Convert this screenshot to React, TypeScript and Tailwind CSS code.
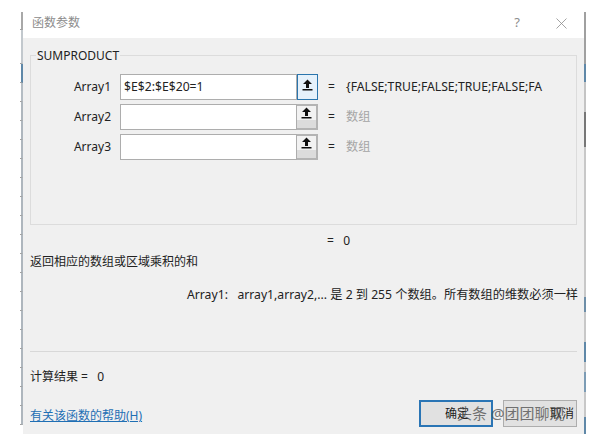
const font = { fontFamily: '"Noto Sans", "Noto Sans CJK SC", sans-serif' }

// bits of the worksheet that show behind the dialog, [height, colour]
const leftEdge: [number, string][] = [
    [18, '#a8a8a8'], [34, '#c2c8cd'], [19, '#5f88a8'], [19, '#b4bcc3'], [19, '#aeb6bd'], [19, '#aeb6bd'],
    [19, '#aeb6bd'], [19, '#aeb6bd'], [19, '#aeb6bd'], [19, '#aeb6bd'], [19, '#aeb6bd'], [19, '#aeb6bd'],
    [19, '#aeb6bd'], [19, '#aeb6bd'], [19, '#aeb6bd'], [19, '#aeb6bd'], [19, '#aeb6bd'], [19, '#aeb6bd'],
    [19, '#aeb6bd'], [19, '#aeb6bd'], [19, '#aeb6bd'],
]
const rightEdge: [number, string][] = [
    [52, '#a0a0a0'], [18, '#5f88a8'], [30, '#c4c4c4'], [35, '#777777'], [150, '#c8c8c8'], [15, '#6d8ea8'],
    [30, '#c8c8c8'], [20, '#5f88a8'], [10, '#c8c8c8'], [20, '#7c9cb5'], [25, '#c8c8c8'], [17, '#5f88a8'],
]

function UpIcon() {
    return (
        <svg width="11" height="12" viewBox="0 0 11 12" className="block">
            <path d="M5.5 0.5 L10 5 H7 V9 H4 V5 H1 Z" fill="#111" />
            <rect x="0.5" y="10" width="10" height="1.5" fill="#111" />
        </svg>
    )
}

function ArgRow({ label, value, result, active }: { label: string; value?: string; result: string; active?: boolean }) {
    return (
        <div className="flex items-center h-[26px]">
            <div className="w-[80px] text-right text-[12px] text-[#222]">{label}</div>
            <div className="ml-[9px] w-[177px] h-[26px] bg-white border border-[#adadad] pl-[3px] flex items-center text-[12.2px] text-[#222]">
                {value}
            </div>
            {active ? (
                <div className="w-[21px] h-[26px] border border-[#2a75ad] bg-[#e5f1fb] flex justify-center pt-[4px]">
                    <UpIcon />
                </div>
            ) : (
                <div className="w-[21px] h-[26px] border-2 border-[#b4b4b4] border-l-0 bg-[#dcdcdc] flex flex-col">
                    <div className="h-[14px] bg-[#f2f2f2] flex justify-center pt-[1px]">
                        <UpIcon />
                    </div>
                </div>
            )}
            <div className="ml-[10px] w-[18px] text-[12px] text-[#222]">=</div>
            <div className={`text-[12.2px] whitespace-nowrap ${active ? 'text-[#222]' : 'text-[#a5a5a5]'}`}>{result}</div>
        </div>
    )
}

export default function App() {
    return (
        <div className="w-[607px] h-[445px] bg-white overflow-hidden flex pt-[12px] pl-[20px]" style={font}>
            <div className="w-[3px] h-[422px] flex flex-col shrink-0">
                {leftEdge.map(([h, c], i) => (
                    <div key={i} className="border-b border-r-2 border-b-[#a0a0a0]" style={{ height: h, borderRightColor: c }} />
                ))}
            </div>

            {/* Dialog */}
            <div className="w-[561px] h-[422px] flex flex-col relative shrink-0">
                <div className="h-[26px] bg-white flex items-center pl-[9px] pb-[4px] shrink-0">
                    <span className="text-[12px] text-[#8c8c8c]">函数参数</span>
                    <span className="ml-auto text-[13px] text-[#8c8c8c]">?</span>
                    <svg width="11" height="11" viewBox="0 0 11 11" className="ml-[36px] mr-[17px]">
                        <path d="M0.5 0.5 L10.5 10.5 M10.5 0.5 L0.5 10.5" stroke="#8c8c8c" strokeWidth="0.8" />
                    </svg>
                </div>

                <div className="flex-1 bg-[#f0f0f0] px-[7px] flex flex-col text-[#222]">
                    <fieldset className="mt-[9px] h-[178px] border border-[#dcdcdc] pt-[10px] shrink-0">
                        <legend className="ml-[5px] px-[1px] text-[12px] leading-[17px] text-[#222]">SUMPRODUCT</legend>
                        <div className="flex flex-col gap-[4px]">
                            <ArgRow label="Array1" value="$E$2:$E$20=1" result="{FALSE;TRUE;FALSE;TRUE;FALSE;FA" active />
                            <ArgRow label="Array2" result="数组" />
                            <ArgRow label="Array3" result="数组" />
                        </div>
                    </fieldset>

                    <div className="mt-[7px] pl-[297px] text-[12px] leading-[17px]">=&nbsp;&nbsp;&nbsp;0</div>
                    <div className="mt-[4px] text-[12px] leading-[17px]">返回相应的数组或区域乘积的和</div>
                    <div className="mt-[16px] pl-[157px] text-[12.2px] leading-[17px] whitespace-nowrap">
                        Array1:&nbsp;&nbsp;&nbsp;array1,array2,... 是 2 到 255 个数组。所有数组的维数必须一样
                    </div>

                    <div className="mt-[48px] border-t border-[#d8d8d8] shrink-0" />
                    <div className="mt-[16px] text-[12px] leading-[17px]">计算结果 =&nbsp;&nbsp;&nbsp;0</div>

                    <div className="mt-[7px] flex items-start">
                        <a className="mt-[15px] text-[12px] leading-[17px] text-[#1f6fb4] underline">有关该函数的帮助(H)</a>
                        <div className="ml-auto flex gap-[10px] mt-[8px]">
                            <div className="w-[74px] h-[27px] bg-[#e1e1e1] border-2 border-[#2a75b5] flex items-center pl-[24px] text-[12px]">确定</div>
                            <div className="w-[74px] h-[27px] bg-[#e1e1e1] border border-[#adadad] flex items-center justify-end pr-[2px] text-[12px]">取消</div>
                        </div>
                    </div>
                </div>

                {/* Watermark over the buttons */}
                <div className="absolute left-[434px] top-[391px] text-[15px] leading-[20px] text-[#555] opacity-80 whitespace-nowrap">
                    头条 @团团聊观
                </div>
            </div>

            {/* Sheet peeking out on the right */}
            <div className="w-[2px] h-[422px] flex flex-col shrink-0">
                {rightEdge.map(([h, c], i) => (
                    <div key={i} style={{ height: h, backgroundColor: c }} />
                ))}
            </div>
        </div>
    )
}
